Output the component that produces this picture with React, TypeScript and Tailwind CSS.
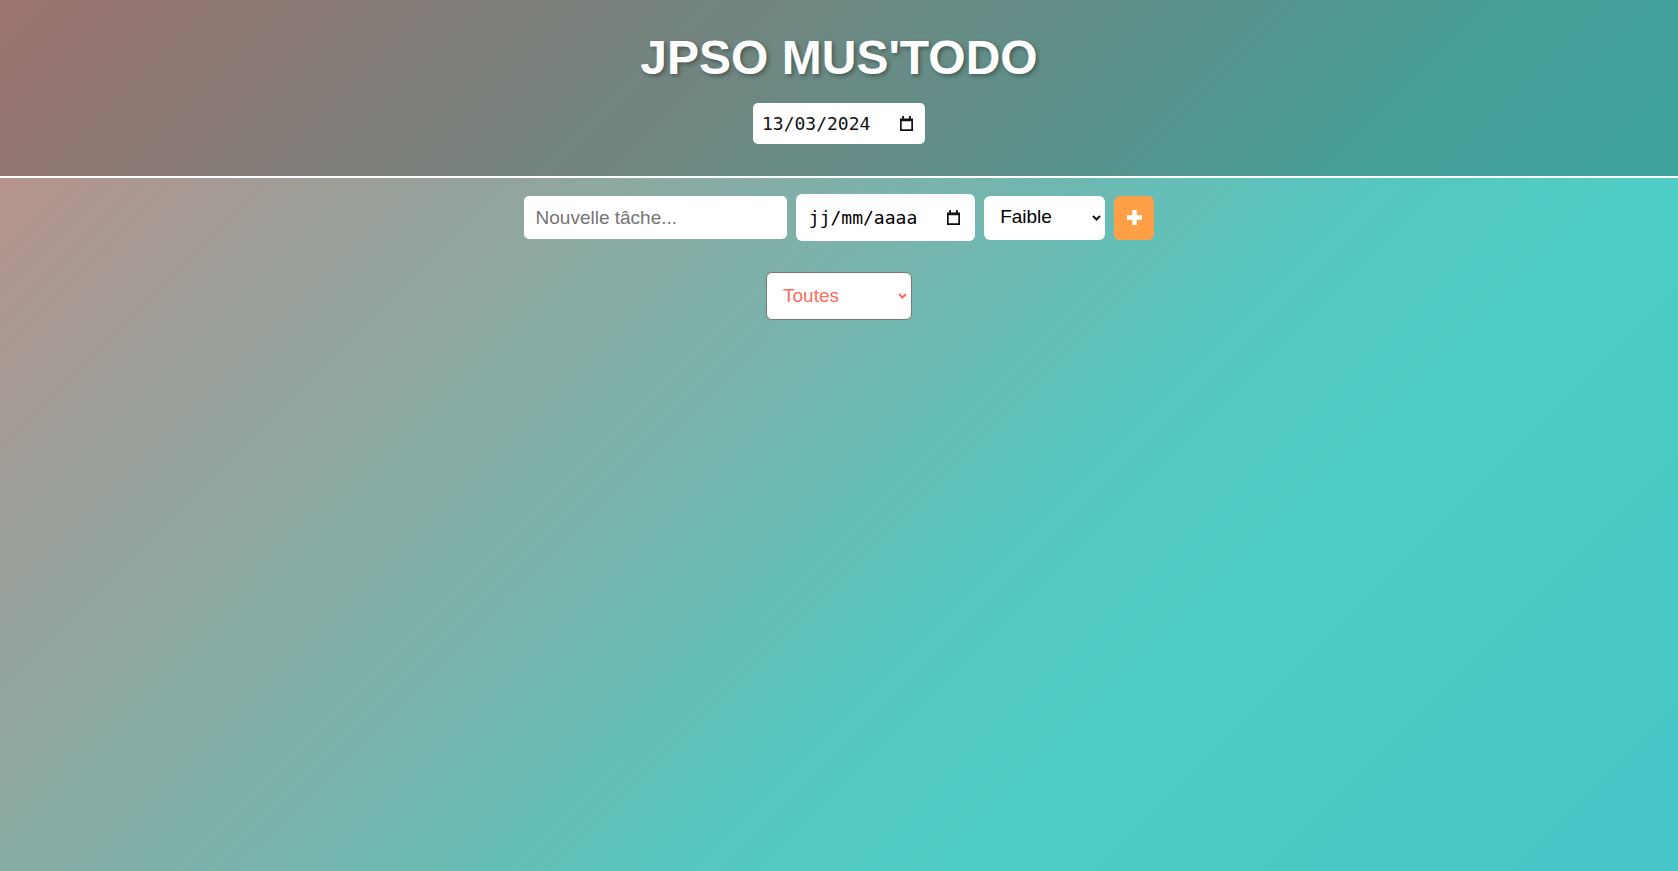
import React from "react";

function CalendarIcon({ className = "" }: { className?: string }) {
  return (
    <svg className={className} width="13" height="15" viewBox="0 0 13 15" fill="#111">
      <rect x="2.2" y="0" width="1.8" height="3" />
      <rect x="9" y="0" width="1.8" height="3" />
      <path fillRule="evenodd" d="M0 2.4h13V15H0z M1.7 5.3v8h9.6v-8z" />
    </svg>
  );
}

function Chevron({ color }: { color: string }) {
  return (
    <svg width="9" height="6" viewBox="0 0 9 6" fill="none">
      <path d="M1 1l3.5 3.5L8 1" stroke={color} strokeWidth="2" />
    </svg>
  );
}

export default function App() {
  return (
    <div className="min-h-screen w-full bg-[linear-gradient(135deg,#c4908d_0%,#b0958f_10%,#9a9f99_22%,#87aca4_35%,#75b5ae_46%,#56c8c0_61%,#4ecdc4_73%,#4bc8c6_88%,#48c3c8_100%)] font-['Liberation_Sans',Arial,sans-serif]">
      <header className="flex flex-col items-center bg-black/20 pt-[30px] pb-[32px] border-b-2 border-white">
        <h1 className="text-[48px] leading-[55px] font-bold text-white [text-shadow:2px_2px_4px_rgba(0,0,0,0.35)]">
          JPSO MUS'TODO
        </h1>
        <div className="mt-[18px] flex h-[41px] w-[172px] items-center justify-between rounded-[5px] bg-white pl-[9px] pr-[12px]">
          <span className="font-['DejaVu_Sans_Mono',monospace] text-[18px] text-[#111]">13/03/2024</span>
          <CalendarIcon />
        </div>
      </header>

      <main className="flex flex-col items-center">
        <div className="mt-[16px] flex items-center gap-[9.3px]">
          <input
            type="text"
            placeholder="Nouvelle tâche..."
            className="h-[43px] w-[263px] rounded-[5px] bg-white pl-[12px] text-[19px] text-black outline-none placeholder:text-[#757575]"
          />
          <div className="flex h-[47px] w-[179px] items-center justify-between rounded-[6px] bg-white pl-[13px] pr-[15px]">
            <span className="font-['DejaVu_Sans_Mono',monospace] text-[18px] text-black">jj/mm/aaaa</span>
            <CalendarIcon />
          </div>
          <div className="relative h-[44px] w-[121px]">
            <select className="h-full w-full appearance-none rounded-[6px] bg-white pl-[16px] text-[19px] text-black outline-none">
              <option>Faible</option>
              <option>Moyenne</option>
              <option>Haute</option>
            </select>
            <div className="pointer-events-none absolute right-[4px] top-[19px] flex">
              <Chevron color="#111" />
            </div>
          </div>
          <button className="flex h-[44px] w-[40px] items-center justify-center rounded-[6px] bg-[#ffa048]">
            <svg width="17" height="17" viewBox="0 0 17 17" fill="none">
              <path d="M8.5 1v15M1 8.5h15" stroke="white" strokeWidth="4.4" />
            </svg>
          </button>
        </div>

        <div className="relative mt-[31px] h-[48px] w-[146px]">
          <select className="h-full w-full appearance-none rounded-[6px] border border-[#767676] bg-white pl-[16px] text-[19px] text-[#ff6b5b] outline-none">
            <option>Toutes</option>
            <option>Actives</option>
            <option>Terminées</option>
          </select>
          <div className="pointer-events-none absolute right-[5px] top-[21px] flex">
            <Chevron color="#ff6b5b" />
          </div>
        </div>
      </main>
    </div>
  );
}
